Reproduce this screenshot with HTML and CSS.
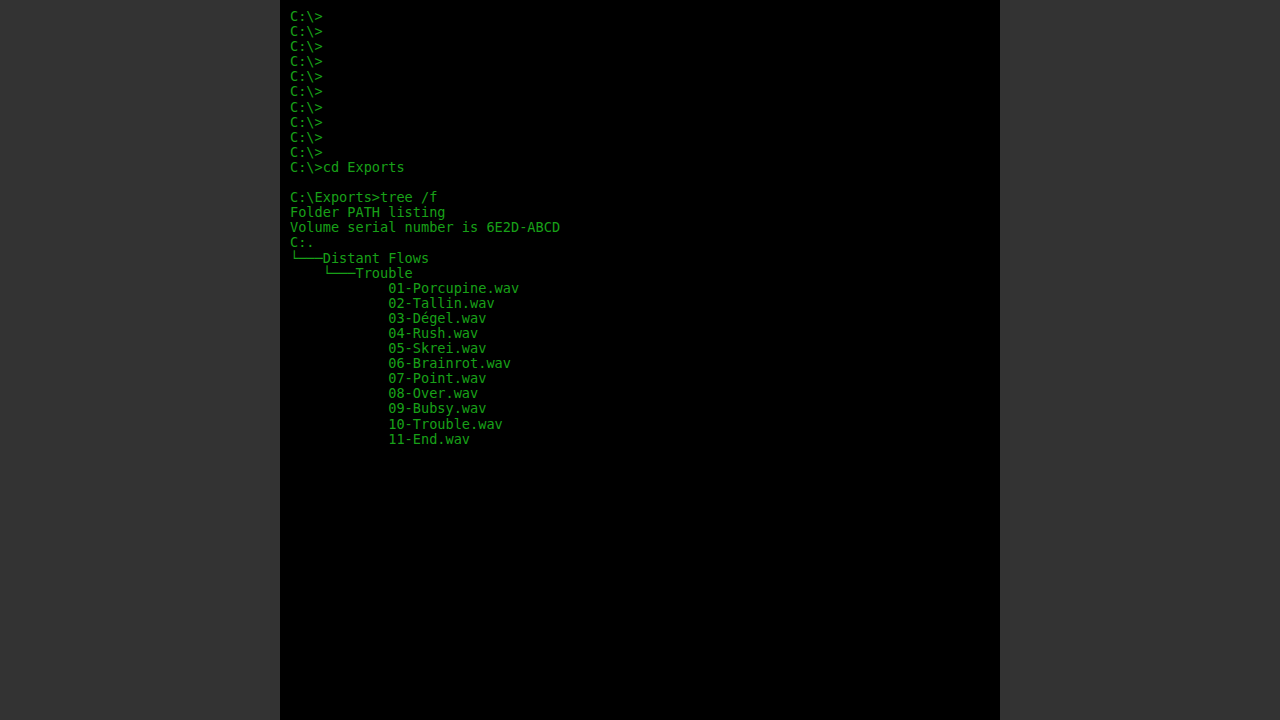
FILE: index.html
```html
<!DOCTYPE html>
<html lang="en">
<head>
<meta charset="utf-8">
<title>Command Prompt</title>
<link rel="stylesheet" href="styles.css">
</head>
<body>
<div class="stage">
<main class="terminal"><pre class="output">C:\&gt;
C:\&gt;
C:\&gt;
C:\&gt;
C:\&gt;
C:\&gt;
C:\&gt;
C:\&gt;
C:\&gt;
C:\&gt;
C:\&gt;cd Exports

C:\Exports&gt;tree /f
Folder PATH listing
Volume serial number is 6E2D-ABCD
C:.
└───Distant Flows
    └───Trouble
            01-Porcupine.wav
            02-Tallin.wav
            03-Dégel.wav
            04-Rush.wav
            05-Skrei.wav
            06-Brainrot.wav
            07-Point.wav
            08-Over.wav
            09-Bubsy.wav
            10-Trouble.wav
            11-End.wav</pre></main>
</div>
</body>
</html>
```
FILE: styles.css
```css
html, body {
  margin: 0;
  padding: 0;
  background: #333333;
  height: 100%;
}
.stage {
  display: flex;
  justify-content: center;
  height: 720px;
}
.terminal {
  width: 720px;
  height: 720px;
  background: #000000;
  padding: 9px 0 0 10px;
  box-sizing: border-box;
  overflow: hidden;
}
.output {
  margin: 0;
  font-family: "DejaVu Sans Mono", "Liberation Mono", monospace;
  font-size: 13.6px;
  line-height: 15.1px;
  color: #18a018;
  white-space: pre;
}
```
